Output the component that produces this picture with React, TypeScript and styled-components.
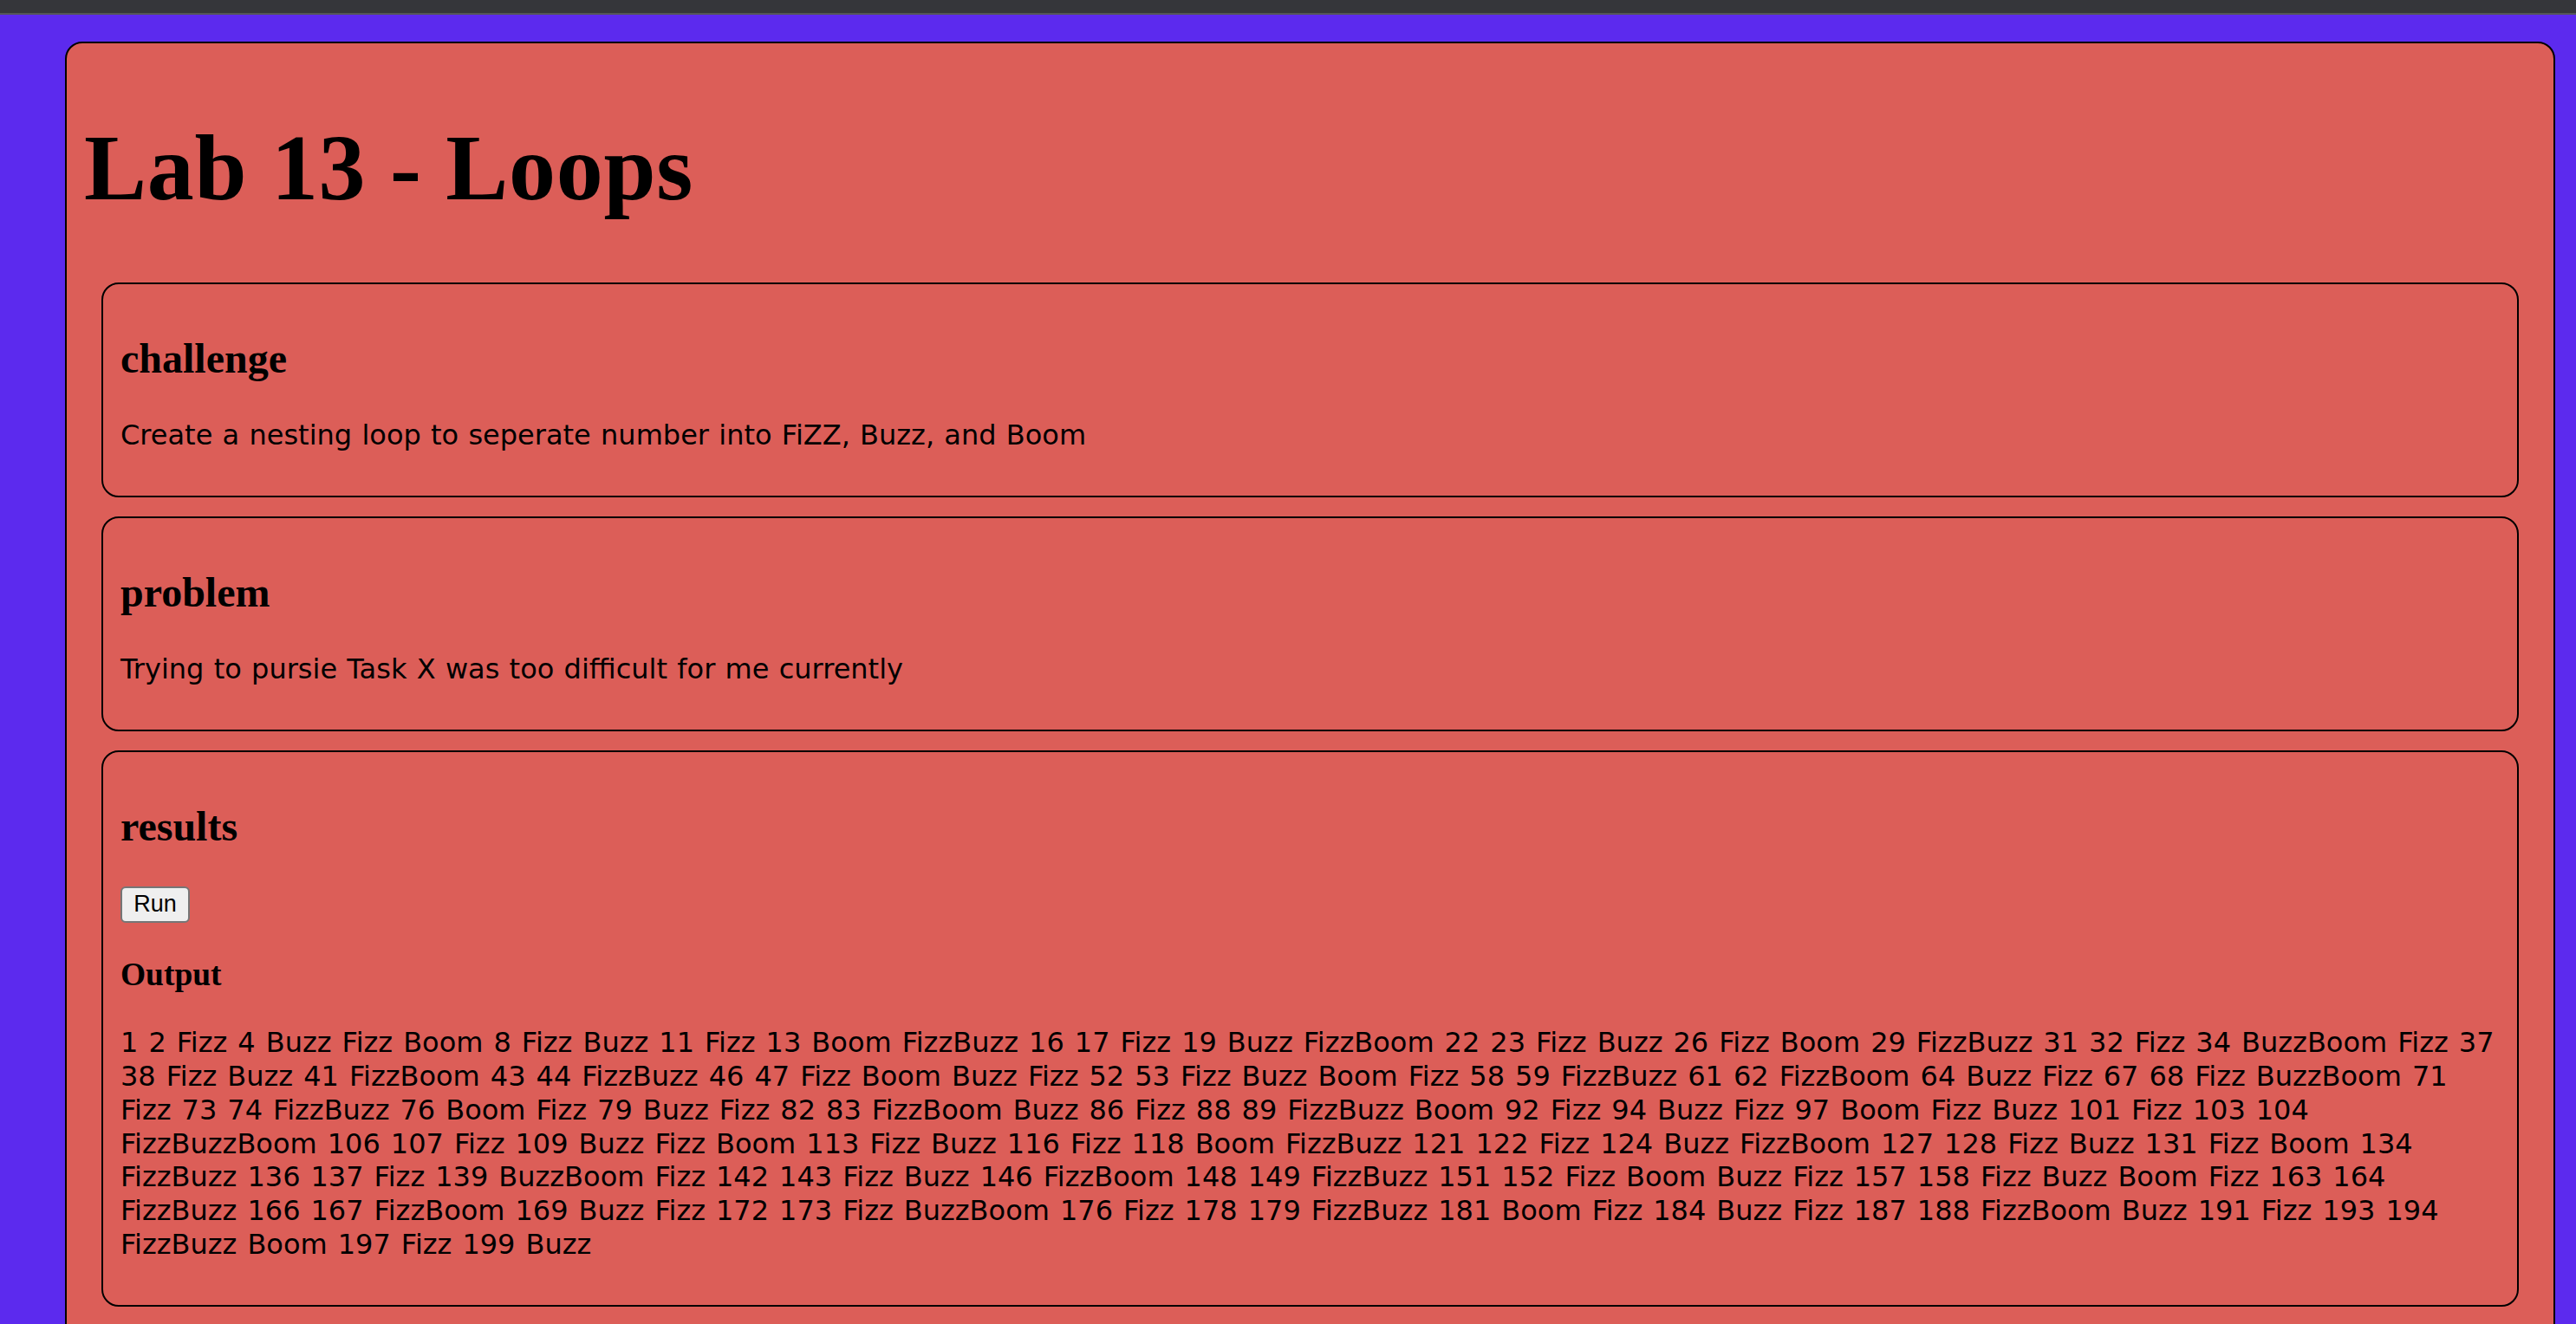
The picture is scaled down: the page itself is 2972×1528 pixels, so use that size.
import React from "react";
import styled, { createGlobalStyle } from "styled-components";

const GlobalStyle = createGlobalStyle`
  html, body {
    margin: 0;
    padding: 0;
    background: #5c2aee;
    overflow: hidden;
    scrollbar-width: none;
  }
  body {
    font-family: "DejaVu Sans", Verdana, sans-serif;
    color: #000;
  }
  ::-webkit-scrollbar { display: none; }
`;

const TopBar = styled.div`
  height: 15px;
  background: #35363a;
  border-bottom: 2px solid #55565a;
`;

const Page = styled.main`
  padding: 31px 24px 0 75px;
`;

const Container = styled.div`
  background: #dc5e58;
  border: 2px solid #000;
  border-radius: 20px;
  padding: 20px;
`;

const Title = styled.h1`
  font-family: "Liberation Serif", "Times New Roman", serif;
  font-weight: 700;
  font-size: 108px;
  line-height: 120px;
  letter-spacing: 0.7px;
  margin: 64px 0 72px;
`;

const Card = styled.section`
  margin: 0 20px 22px;
  padding: 18px 20px;
  border: 2px solid #000;
  border-radius: 20px;
`;

const CardTitle = styled.h2`
  font-family: "Liberation Serif", "Times New Roman", serif;
  font-weight: 700;
  font-size: 48px;
  line-height: 55px;
  margin: 40px 0 42px;
`;

const Text = styled.p<{ $wide?: boolean }>`
  font-family: "DejaVu Sans", Verdana, sans-serif;
  font-size: 32px;
  line-height: 38.9px;
  word-spacing: ${(p) => (p.$wide ? "1.85px" : "1.1px")};
  margin: 0 0 32px;
`;

const RunButton = styled.button`
  display: block;
  width: 80px;
  height: 42px;
  padding: 0;
  margin: 1px 0 0;
  font-family: "Liberation Sans", Arial, sans-serif;
  font-size: 27px;
  color: #000;
  background: #efefef;
  border: 2px solid #767676;
  border-radius: 6px;
  cursor: pointer;
`;

const OutputTitle = styled.h3`
  font-family: "Liberation Serif", "Times New Roman", serif;
  font-weight: 700;
  font-size: 37.44px;
  line-height: 43px;
  margin: 38px 0 38px;
`;

const OutputLine = styled.span`
  display: block;
  white-space: nowrap;
`;

const fizz = (n: number): string => {
  let s = "";
  if (n % 3 === 0) s += "Fizz";
  if (n % 5 === 0) s += "Buzz";
  if (n % 7 === 0) s += "Boom";
  return s || String(n);
};

const breaks = [37, 71, 104, 134, 164, 194, 200];

const buildLines = (): string[] => {
  const lines: string[] = [];
  let start = 1;
  for (const end of breaks) {
    const parts: string[] = [];
    for (let i = start; i <= end; i++) parts.push(fizz(i));
    lines.push(parts.join(" "));
    start = end + 1;
  }
  return lines;
};

export default function App() {
  const lines = buildLines();
  return (
    <>
      <GlobalStyle />
      <TopBar />
      <Page>
        <Container>
          <Title>Lab 13 - Loops</Title>
          <Card>
            <CardTitle>challenge</CardTitle>
            <Text>Create a nesting loop to seperate number into FiZZ, Buzz, and Boom</Text>
          </Card>
          <Card>
            <CardTitle>problem</CardTitle>
            <Text>Trying to pursie Task X was too difficult for me currently</Text>
          </Card>
          <Card>
            <CardTitle>results</CardTitle>
            <RunButton type="button">Run</RunButton>
            <OutputTitle>Output</OutputTitle>
            <Text $wide>
              {lines.map((line, i) => (
                <OutputLine key={i}>{line}</OutputLine>
              ))}
            </Text>
          </Card>
        </Container>
      </Page>
    </>
  );
}
